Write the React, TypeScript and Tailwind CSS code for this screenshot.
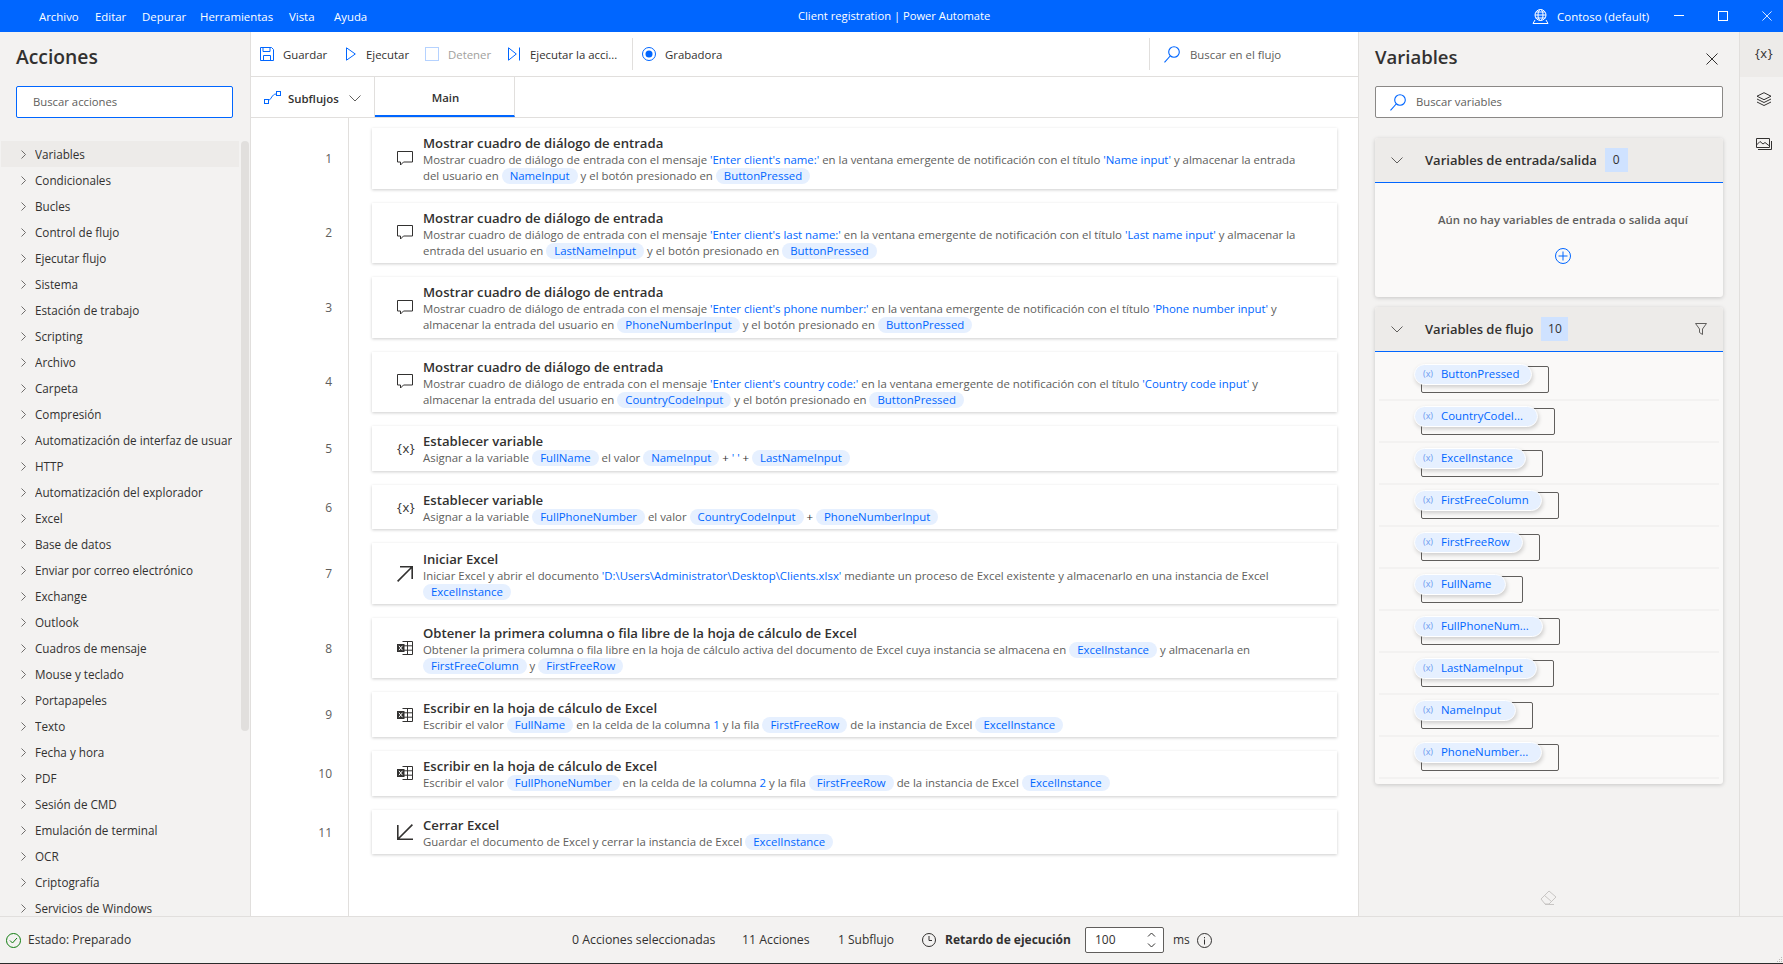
import React from "react";

const Blue = ({ children }: { children: React.ReactNode }) => <span className="text-[#0066ff]">{children}</span>;
const P = ({ children }: { children: React.ReactNode }) => (
  <span className="inline-block h-[16px] leading-[16px] px-2 rounded-full bg-[#e6f0ff] text-[#0066ff]">{children}</span>
);

const Bubble = () => (
  <svg width="16" height="15" viewBox="0 0 16 15" fill="none" stroke="#323130" strokeWidth="1">
    <path d="M.5.5h15v10.5H6.5L3.5 14v-3H.5z" />
  </svg>
);
const VarIcon = () => <span className="text-[13px] leading-none text-[#323130] tracking-[0.5px]">{"{x}"}</span>;
const ArrowOut = () => (
  <svg width="16" height="16" viewBox="0 0 16 16" fill="none" stroke="#323130" strokeWidth="1.6">
    <path d="M3 .8h12.2V13M15.2.8.6 15.4" />
  </svg>
);
const ArrowIn = () => (
  <svg width="16" height="16" viewBox="0 0 16 16" fill="none" stroke="#323130" strokeWidth="1.6">
    <path d="M.8 1v14.2H16M.8 15.2 15.4.6" />
  </svg>
);
const ExcelIcon = () => (
  <svg width="16" height="14" viewBox="0 0 16 14" fill="none">
    <path d="M5.5.5h10v13h-10M5.5 4.8h10M5.5 9.2h10M10.5.5v13" stroke="#323130" />
    <rect x="0" y="3" width="7.500" height="8" fill="#323130" />
    <path d="M2 4.800 5.400 9.200M5.400 4.800 2 9.200" stroke="#fff" />
  </svg>
);
const Chevron = ({ className = "" }: { className?: string }) => (
  <svg className={className} width="12" height="7" viewBox="0 0 12 7" fill="none" stroke="#605e5c" strokeWidth="1">
    <path d="M.5.5 6 6 11.500.5" />
  </svg>
);
const Search = () => (
  <svg width="16" height="17" viewBox="0 0 16 17" fill="none" stroke="#0066ff" strokeWidth="1.1">
    <circle cx="10" cy="6" r="5.300" />
    <path d="M6.200 10 .5 16.300" />
  </svg>
);
const Close = ({ size = 12, color = "#323130" }: { size?: number; color?: string }) => (
  <svg width={size} height={size} viewBox="0 0 12 12" fill="none" stroke={color} strokeWidth="1">
    <path d="M.5.5l11 11M11.500.5l-11 11" />
  </svg>
);

type Card = { n: number; icon: React.ReactNode; title: string; lines: React.ReactNode[]; };

const cards: Card[] = [
  {
    n: 1, icon: <Bubble />, title: "Mostrar cuadro de diálogo de entrada",
    lines: [
      <>Mostrar cuadro de diálogo de entrada con el mensaje <Blue>'Enter client's name:'</Blue> en la ventana emergente de notificación con el título <Blue>'Name input'</Blue> y almacenar la entrada</>,
      <>del usuario en <P>NameInput</P> y el botón presionado en <P>ButtonPressed</P></>,
    ],
  },
  {
    n: 2, icon: <Bubble />, title: "Mostrar cuadro de diálogo de entrada",
    lines: [
      <>Mostrar cuadro de diálogo de entrada con el mensaje <Blue>'Enter client's last name:'</Blue> en la ventana emergente de notificación con el título <Blue>'Last name input'</Blue> y almacenar la</>,
      <>entrada del usuario en <P>LastNameInput</P> y el botón presionado en <P>ButtonPressed</P></>,
    ],
  },
  {
    n: 3, icon: <Bubble />, title: "Mostrar cuadro de diálogo de entrada",
    lines: [
      <>Mostrar cuadro de diálogo de entrada con el mensaje <Blue>'Enter client's phone number:'</Blue> en la ventana emergente de notificación con el título <Blue>'Phone number input'</Blue> y</>,
      <>almacenar la entrada del usuario en <P>PhoneNumberInput</P> y el botón presionado en <P>ButtonPressed</P></>,
    ],
  },
  {
    n: 4, icon: <Bubble />, title: "Mostrar cuadro de diálogo de entrada",
    lines: [
      <>Mostrar cuadro de diálogo de entrada con el mensaje <Blue>'Enter client's country code:'</Blue> en la ventana emergente de notificación con el título <Blue>'Country code input'</Blue> y</>,
      <>almacenar la entrada del usuario en <P>CountryCodeInput</P> y el botón presionado en <P>ButtonPressed</P></>,
    ],
  },
  {
    n: 5, icon: <VarIcon />, title: "Establecer variable",
    lines: [<>Asignar a la variable <P>FullName</P> el valor <P>NameInput</P> <span className="text-[#323130]">+</span> <Blue>' '</Blue> <span className="text-[#323130]">+</span> <P>LastNameInput</P></>],
  },
  {
    n: 6, icon: <VarIcon />, title: "Establecer variable",
    lines: [<>Asignar a la variable <P>FullPhoneNumber</P> el valor <P>CountryCodeInput</P> <span className="text-[#323130]">+</span> <P>PhoneNumberInput</P></>],
  },
  {
    n: 7, icon: <ArrowOut />, title: "Iniciar Excel",
    lines: [
      <>Iniciar Excel y abrir el documento <Blue>'D:\Users\Administrator\Desktop\Clients.xlsx'</Blue> mediante un proceso de Excel existente y almacenarlo en una instancia de Excel</>,
      <P>ExcelInstance</P>,
    ],
  },
  {
    n: 8, icon: <ExcelIcon />, title: "Obtener la primera columna o fila libre de la hoja de cálculo de Excel",
    lines: [
      <>Obtener la primera columna o fila libre en la hoja de cálculo activa del documento de Excel cuya instancia se almacena en <P>ExcelInstance</P> y almacenarla en</>,
      <><P>FirstFreeColumn</P> y <P>FirstFreeRow</P></>,
    ],
  },
  {
    n: 9, icon: <ExcelIcon />, title: "Escribir en la hoja de cálculo de Excel",
    lines: [<>Escribir el valor <P>FullName</P> en la celda de la columna <Blue>1</Blue> y la fila <P>FirstFreeRow</P> de la instancia de Excel <P>ExcelInstance</P></>],
  },
  {
    n: 10, icon: <ExcelIcon />, title: "Escribir en la hoja de cálculo de Excel",
    lines: [<>Escribir el valor <P>FullPhoneNumber</P> en la celda de la columna <Blue>2</Blue> y la fila <P>FirstFreeRow</P> de la instancia de Excel <P>ExcelInstance</P></>],
  },
  {
    n: 11, icon: <ArrowIn />, title: "Cerrar Excel",
    lines: [<>Guardar el documento de Excel y cerrar la instancia de Excel <P>ExcelInstance</P></>],
  },
];

const groups = [
  "Variables", "Condicionales", "Bucles", "Control de flujo", "Ejecutar flujo", "Sistema", "Estación de trabajo", "Scripting",
  "Archivo", "Carpeta", "Compresión", "Automatización de interfaz de usuario", "HTTP", "Automatización del explorador", "Excel",
  "Base de datos", "Enviar por correo electrónico", "Exchange", "Outlook", "Cuadros de mensaje", "Mouse y teclado", "Portapapeles",
  "Texto", "Fecha y hora", "PDF", "Sesión de CMD", "Emulación de terminal", "OCR", "Criptografía", "Servicios de Windows",
];

const flowVars = [
  { name: "ButtonPressed", w: "w-[118px]" },
  { name: "CountryCodeI...", w: "w-[124px]" },
  { name: "ExcelInstance", w: "w-[112px]" },
  { name: "FirstFreeColumn", w: "w-[128px]" },
  { name: "FirstFreeRow", w: "w-[109px]" },
  { name: "FullName", w: "w-[92px]" },
  { name: "FullPhoneNum...", w: "w-[129px]" },
  { name: "LastNameInput", w: "w-[123px]" },
  { name: "NameInput", w: "w-[102px]" },
  { name: "PhoneNumber...", w: "w-[128px]" },
];

const menus = [
  { t: "Archivo", w: "w-[56px]" },
  { t: "Editar", w: "w-[47px]" },
  { t: "Depurar", w: "w-[58px]" },
  { t: "Herramientas", w: "w-[89px]" },
  { t: "Vista", w: "w-[45px]" },
  { t: "Ayuda", w: "w-[50px]" },
];

function TitleBar() {
  return (
    <div className="h-8 shrink-0 bg-[#0066ff] text-white text-[11.400px] flex items-center">
      <div className="w-[798px] shrink-0 flex pl-[39px] pt-px">
        {menus.map((m) => (
          <span key={m.t} className={`${m.w} whitespace-nowrap`}>{m.t}</span>
        ))}
      </div>
      <div className="pt-px whitespace-nowrap text-[11.200px]">Client registration | Power Automate</div>
      <div className="flex-1 flex items-center justify-end">
        <svg width="17" height="15" viewBox="0 0 17 15" fill="none" stroke="#fff" strokeWidth="1">
          <circle cx="8.500" cy="6" r="5.500" />
          <ellipse cx="8.500" cy="6" rx="2.500" ry="5.500" />
          <path d="M3 6h11M4 3h9M3.500 9h10M3 11 1 14.500h15L14 11" />
        </svg>
        <span className="ml-2 w-[117px] pt-px text-[11.500px]">Contoso (default)</span>
        <svg width="10" height="10" viewBox="0 0 10 10" stroke="#fff"><path d="M0 4.500h10" /></svg>
        <svg className="ml-[34px]" width="10" height="10" viewBox="0 0 10 10" fill="none" stroke="#fff"><rect x=".5" y=".5" width="9" height="9" /></svg>
        <span className="ml-[34px] mr-[11px]"><Close size={10} color="#fff" /></span>
      </div>
    </div>
  );
}

function Sidebar() {
  return (
    <aside className="w-[251px] shrink-0 h-full bg-[#f3f2f1] border-r border-[#e1dfdd] flex flex-col overflow-hidden">
      <h2 className="h-[54px] pl-4 pb-[3px] flex items-center text-[19.300px] font-semibold text-[#323130]">Acciones</h2>
      <div className="mx-4 h-8 w-[217px] shrink-0 bg-white border border-[#0066ff] rounded-[2px] pl-4 pt-px flex items-center text-[11.300px] text-[#605e5c]">
        Buscar acciones
      </div>
      <div className="relative flex-1 mt-[23px] overflow-hidden">
        <ul className="pl-px">
          {groups.map((g, i) => (
            <li key={g} className={`h-[26px] w-[238px] pt-px flex items-center text-[11.700px] text-[#323130] ${i === 0 ? "bg-[#edebe9]" : ""}`}>
              <svg className="ml-[20px] mr-[9px] shrink-0" width="5" height="9" viewBox="0 0 5 9" fill="none" stroke="#605e5c" strokeWidth="0.9"><path d="M.5.5l4 4-4 4" /></svg>
              <span className="w-[197px] overflow-hidden whitespace-nowrap">{g}</span>
            </li>
          ))}
        </ul>
        <div className="absolute left-[241px] top-0 w-2 h-[590px] rounded-full bg-[#e1dfdd]" />
      </div>
    </aside>
  );
}

function Toolbar() {
  return (
    <div className="h-[45px] shrink-0 border-b border-[#e1dfdd] flex items-center text-[11.400px] text-[#323130] whitespace-nowrap">
      <svg className="ml-[9px] shrink-0" width="14" height="14" viewBox="0 0 14 14" fill="none" stroke="#0066ff">
        <path d="M.5.5h11l2 2v11H.5zM3 .5v4h7v-4M3.500 13.500V8.500h7v5" />
      </svg>
      <span className="ml-[9px] w-[63px] shrink-0 pt-px">Guardar</span>
      <svg className="shrink-0" width="10" height="14" viewBox="0 0 10 14" fill="none" stroke="#0066ff"><path d="M.5.8 9.300 7 .5 13.200z" /></svg>
      <span className="ml-[10px] w-[59px] shrink-0 pt-px">Ejecutar</span>
      <span className="w-[14px] h-[14px] shrink-0 border border-[#b5d2ff]" />
      <span className="ml-[9px] w-[60px] shrink-0 pt-px text-[#a19f9d]">Detener</span>
      <svg className="shrink-0" width="12" height="14" viewBox="0 0 12 14" fill="none" stroke="#0066ff"><path d="M.5.8 8.300 7 .5 13.200zM11.500.5v13" /></svg>
      <span className="ml-[10px] w-[102px] shrink-0 pt-px">Ejecutar la acci...</span>
      <span className="w-px h-8 shrink-0 bg-[#e1dfdd]" />
      <svg className="ml-[9px] shrink-0" width="14" height="14" viewBox="0 0 14 14" fill="none"><circle cx="7" cy="7" r="6.500" stroke="#0066ff" /><circle cx="7" cy="7" r="3.500" fill="#0066ff" /></svg>
      <span className="ml-[9px] w-[484px] shrink-0 pt-px">Grabadora</span>
      <span className="w-px h-8 shrink-0 bg-[#e1dfdd]" />
      <span className="ml-[14px] shrink-0"><Search /></span>
      <span className="ml-[10px] shrink-0 pt-px text-[#605e5c]">Buscar en el flujo</span>
    </div>
  );
}

function Tabs() {
  return (
    <div className="h-[41px] shrink-0 border-b border-[#e1dfdd] flex text-[11.400px] text-[#323130]">
      <div className="w-[124px] flex items-center border-r border-[#e1dfdd] pt-[3px]">
        <svg className="ml-[13px] shrink-0 -mt-[3px]" width="17" height="13" viewBox="0 0 17 13" fill="none" stroke="#0066ff">
          <rect x=".5" y="8.500" width="4" height="4" />
          <rect x="12.500" y=".5" width="4" height="4" />
          <path d="M5 9C7 9 8 3 12 3" />
        </svg>
        <span className="ml-[7px] font-semibold">Subflujos</span>
        <Chevron className="ml-[10px] shrink-0" />
      </div>
      <div className="w-[140px] pl-[2px] pt-[3px] flex items-center justify-center border-r border-[#e1dfdd] border-b-2 border-b-[#0066ff] font-semibold">
        Main
      </div>
    </div>
  );
}

function FlowCard({ c }: { c: Card }) {
  return (
    <div className="flex items-center shrink-0">
      <div className="w-[81px] shrink-0 pt-px text-right text-[12px] text-[#605e5c]">{c.n}</div>
      <div className="w-[40px] shrink-0" />
      <div className={`w-[965px] shrink-0 ${c.lines.length === 2 ? "h-[60.500px]" : "h-[44.700px]"} bg-white shadow-[0_1px_3px_rgba(0,0,0,0.2)] flex items-center`}>
        <div className="w-[51px] pl-[25px] shrink-0 flex items-center">{c.icon}</div>
        <div className="pt-[2px]">
          <div className="text-[13.150px] leading-[18px] font-semibold text-[#323130] whitespace-nowrap">{c.title}</div>
          {c.lines.map((l, i) => (
            <div key={i} className="text-[11.400px] leading-[16px] text-[#605e5c] whitespace-nowrap">{l}</div>
          ))}
        </div>
      </div>
    </div>
  );
}

function Main() {
  return (
    <main className="w-[1107px] shrink-0 h-full bg-white flex flex-col">
      <Toolbar />
      <Tabs />
      <div className="relative flex-1 min-h-0 pt-[10px] flex flex-col gap-[14px] overflow-hidden">
        <div className="absolute left-[97px] top-0 bottom-0 w-px bg-[#e1dfdd]" />
        {cards.map((c) => (
          <FlowCard key={c.n} c={c} />
        ))}
      </div>
    </main>
  );
}

function SectionHeader({ title, count, badge, filter }: { title: string; count: string; badge: string; filter?: boolean }) {
  return (
    <div className="h-[45px] bg-[#edebe9] border-b border-[#0066ff] rounded-t-[3px] flex items-center text-[13px] font-semibold text-[#323130]">
      <Chevron className="ml-4" />
      <span className="ml-[22px] pt-px">{title}</span>
      <span className={`${badge} h-6 ml-2 bg-[#cfe2ff] flex items-center justify-center font-normal text-[12px]`}>{count}</span>
      {filter && (
        <svg className="ml-auto mr-[16px] -mt-px" width="12" height="12" viewBox="0 0 12 12" fill="none" stroke="#605e5c"><path d="M.5.5h11L7.500 6v5.500l-3-2V6z" /></svg>
      )}
    </div>
  );
}

function VariablesPanel() {
  return (
    <section className="w-[381px] shrink-0 h-full bg-[#f3f2f1] border-l border-[#e1dfdd] flex flex-col pl-4 pr-[16px] relative">
      <div className="h-[54px] flex items-center justify-between pr-[5px] shrink-0">
        <h2 className="text-[18.500px] font-semibold text-[#323130] -mt-[5px]">Variables</h2>
        <Close />
      </div>
      <div className="h-8 shrink-0 bg-white border border-[#8a8886] rounded-[2px] flex items-center pl-[14px] text-[11.300px] text-[#605e5c]">
        <Search />
        <span className="ml-[10px] pt-px">Buscar variables</span>
      </div>
      <div className="mt-5 rounded-[3px] shadow-[0_1px_4px_rgba(0,0,0,0.18)] bg-[#faf9f8]">
        <SectionHeader title="Variables de entrada/salida" count="0" badge="w-[23px]" />
        <div className="h-[114px] flex flex-col items-center pt-[28px] pl-[28px]">
          <span className="text-[11.400px] font-semibold text-[#605e5c]">Aún no hay variables de entrada o salida aquí</span>
          <svg className="mt-[20px]" width="16" height="16" viewBox="0 0 16 16" fill="none" stroke="#0066ff">
            <circle cx="8" cy="8" r="7.500" />
            <path d="M8 3.500v9M3.500 8h9" />
          </svg>
        </div>
      </div>
      <div className="mt-[10px] rounded-[3px] shadow-[0_1px_4px_rgba(0,0,0,0.18)] bg-[#faf9f8]">
        <SectionHeader title="Variables de flujo" count="10" badge="w-[27px]" filter />
        <div className="px-1 pt-[7px] pb-[5px]">
          {flowVars.map((v) => (
            <div key={v.name} className="h-[42px] border-b-2 border-[#f3f2f1] pl-[35px] pt-[5px]">
              <div className={`relative ${v.w} h-[21px]`}>
                <div className="absolute left-[7px] top-[2px] -right-[17px] -bottom-[8px] border border-[#605e5c] rounded-[2px]" />
                <div className="absolute inset-0 rounded-full bg-[#e6f0ff] border border-white shadow-[1px_2px_4px_rgba(0,0,0,0.18)] flex items-center text-[11.400px] text-[#0066ff] whitespace-nowrap">
                  <span className="ml-[8px] w-[18px] text-[9px] leading-none -mt-[3px] text-[#6c9cf0]">(x)</span>
                  <span className="-mt-px">{v.name}</span>
                </div>
              </div>
            </div>
          ))}
        </div>
      </div>
      <svg className="absolute left-[181px] bottom-[11px]" width="17" height="15" viewBox="0 0 17 15" fill="none" stroke="#c8c6c4">
        <path d="M1 9 9 1l7 6-7 7H5zM4.500 5.500l7 6M5 14.500h9" />
      </svg>
    </section>
  );
}

function Rail() {
  return (
    <div className="w-[44px] shrink-0 h-full bg-[#f3f2f1] border-l border-[#e1dfdd] flex flex-col items-center text-[#323130]">
      <div className="h-[45px] w-full bg-[#edebe9] flex items-center justify-center pl-[5px] text-[13px] tracking-[0.5px] pb-[1px]">{"{x}"}</div>
      <div className="w-full flex flex-col items-center pl-[5px]">
        <svg className="mt-[15px]" width="16" height="15" viewBox="0 0 16 15" fill="none" stroke="#323130">
          <path d="M8 .7l7 3.500-7 3.500-7-3.500zM1 7l7 3.500L15 7M1 10l7 3.500 7-3.500" />
        </svg>
        <svg className="mt-[31px]" width="16" height="12" viewBox="0 0 16 12" fill="none" stroke="#323130">
          <path d="M.5.5h13v9H.5zM2 11.500h13.500V3M.5 7 4 3.500 7 6l2-1.500L13.500 8" />
        </svg>
      </div>
    </div>
  );
}

function StatusBar() {
  return (
    <div className="relative h-[48px] shrink-0 bg-[#f3f2f1] border-t border-[#e1dfdd] border-b border-b-[#2b2b2b] flex items-center text-[12px] text-[#323130]">
      <svg className="ml-[6px]" width="15" height="15" viewBox="0 0 15 15" fill="none" stroke="#107c10">
        <circle cx="7.500" cy="7.500" r="7" />
        <path d="M4 7.500l2.500 2.500L11 5" />
      </svg>
      <span className="ml-[7px] w-[544px]">Estado: Preparado</span>
      <span className="w-[170px] text-[12.300px]">0 Acciones seleccionadas</span>
      <span className="w-[96px] text-[12.300px]">11 Acciones</span>
      <span className="w-[84px]">1 Subflujo</span>
      <svg width="14" height="14" viewBox="0 0 14 14" fill="none" stroke="#323130">
        <circle cx="7" cy="7" r="6.500" />
        <path d="M7 3v4.500h3" />
      </svg>
      <span className="ml-[9px] w-[140px] font-bold">Retardo de ejecución</span>
      <div className="w-[79px] h-[26px] bg-white border border-[#605e5c] rounded-[2px] flex items-center justify-between pl-[9px] pr-[7px]">
        <span>100</span>
        <svg width="9" height="16" viewBox="0 0 9 16" fill="none" stroke="#323130"><path d="M1 4.500 4.500 1 8 4.500M1 11.500 4.500 15 8 11.500" /></svg>
      </div>
      <span className="ml-[9px] w-[24px]">ms</span>
      <svg width="15" height="15" viewBox="0 0 15 15" fill="none" stroke="#323130">
        <circle cx="7.500" cy="7.500" r="7" />
        <path d="M7.500 6.500v5M7.500 4v1.300" />
      </svg>
      <svg className="absolute right-0 bottom-0" width="6" height="6" viewBox="0 0 6 6" fill="#bdbbb9">
        <rect x="4" y="0" width="1" height="1" />
        <rect x="2" y="2" width="1" height="1" />
        <rect x="4" y="2" width="1" height="1" />
        <rect x="0" y="4" width="1" height="1" />
        <rect x="2" y="4" width="1" height="1" />
        <rect x="4" y="4" width="1" height="1" />
      </svg>
    </div>
  );
}

export default function App() {
  return (
    <div className="w-[1783px] h-[964px] flex flex-col overflow-hidden bg-white [font-family:'Open_Sans',sans-serif]">
      <TitleBar />
      <div className="flex-1 min-h-0 flex">
        <Sidebar />
        <Main />
        <VariablesPanel />
        <Rail />
      </div>
      <StatusBar />
    </div>
  );
}
